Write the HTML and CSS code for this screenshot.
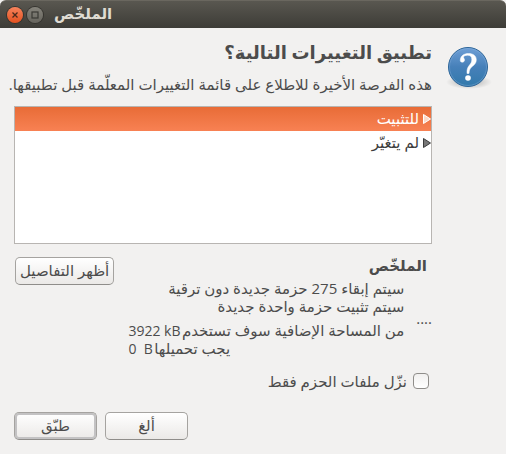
FILE: index.html
```
<!DOCTYPE html>
<html lang="ar" dir="rtl">
<head>
<meta charset="utf-8">
<title>الملخّص</title>
<link rel="stylesheet" href="styles.css">
</head>
<body>
<header class="titlebar">
  <button class="win-button close" type="button" aria-label="أغلق">
    <svg viewBox="0 0 16 16" width="16" height="16"><path d="M5.500 5.500l5 5m0-5l-5 5" fill="none" stroke="#4a2a1c" stroke-width="1.300"/></svg>
  </button>
  <button class="win-button maximize" type="button" aria-label="كبّر">
    <svg viewBox="0 0 16 16" width="16" height="16"><rect x="5" y="5" width="6" height="6" fill="none" stroke="#3a3934" stroke-width="1.200"/></svg>
  </button>
  <span class="window-title">الملخّص</span>
</header>
<main class="dialog">
  <svg class="question" viewBox="0 0 48 48" width="48" height="48" aria-hidden="true">
    <defs>
      <linearGradient id="disc" x1="0" y1="0" x2="0" y2="1"><stop offset="0" stop-color="#6f9fd6"/><stop offset=".5" stop-color="#4680b9"/><stop offset="1" stop-color="#3279ab"/></linearGradient>
      <radialGradient id="shade"><stop offset="0" stop-color="#000" stop-opacity=".3"/><stop offset="1" stop-color="#000" stop-opacity="0"/></radialGradient>
    </defs>
    <ellipse cx="25" cy="38" rx="23" ry="7" fill="url(#shade)"/>
    <circle cx="24" cy="23" r="19.500" fill="url(#disc)" stroke="#2e6699"/>
    <circle cx="24" cy="23" r="18.500" fill="none" stroke="#8fb8e2" stroke-opacity=".35"/>
    <path d="M16.300 16.500C16.300 12 19.800 9.500 24.500 9.500C29.500 9.500 32.300 12 32.300 15.800C32.300 19 30.500 20.700 28.500 22.300C26.300 24 25.200 25.500 25 29.500H23C22.800 25.500 23.500 23.500 25.300 21.300C27 19.300 27.800 18 27.800 15.500C27.800 12.500 26.300 11.200 23.700 11.200C21.300 11.200 19.500 12 19.500 13.300C19.500 14.200 20.500 14.700 20.500 16C20.500 17.300 19.600 18.200 18.300 18.200C17.100 18.200 16.300 17.500 16.300 16.500Z" fill="#fff" stroke="#fff" stroke-width=".5"/>
    <circle cx="24" cy="34" r="2.800" fill="#fff"/>
  </svg>
  <div class="content">
    <h1>تطبيق التغييرات التالية؟</h1>
    <p class="intro">هذه الفرصة الأخيرة للاطلاع على قائمة التغييرات المعلّمة قبل تطبيقها.</p>
    <ul class="tree">
      <li class="row selected"><svg class="expander" viewBox="0 0 8 10" width="8" height="10"><path d="M.5.500L7.500 5L.5 9.500Z" fill="#fbd9ca" stroke="#fff"/></svg>للتثبيت</li>
      <li class="row"><svg class="expander" viewBox="0 0 8 10" width="8" height="10"><path d="M.5.500L7.500 5L.5 9.500Z" fill="#777" stroke="#3c3c3c"/></svg>لم يتغيّر</li>
    </ul>
    <section class="summary">
      <div class="summary-text">
        <h2>الملخّص</h2>
        <div class="details">
          <span class="dots">....</span>
          <div class="lines">
            <p>سيتم إبقاء 275 حزمة جديدة دون ترقية<br>سيتم تثبيت حزمة واحدة جديدة</p>
            <div class="sizes">
              <p>من المساحة الإضافية سوف تستخدم&#8202;<bdi dir="ltr">3922 kB</bdi></p>
              <p>يجب تحميلها&#8202;<bdi dir="ltr">0&nbsp; B</bdi></p>
            </div>
          </div>
        </div>
      </div>
      <button class="button show" type="button">أظهر التفاصيل</button>
    </section>
    <label class="check"><input type="checkbox">نزّل ملفات الحزم فقط</label>
    <footer class="actions">
      <button class="button action" type="button">ألغ</button>
      <button class="button action default" type="button">طبّق</button>
    </footer>
  </div>
</main>
</body>
</html>
```

FILE: styles.css
```
* { box-sizing: border-box; }
body {
  margin: 0;
  min-height: 100vh;
  background: #f2f1f0;
  color: #4c4c4c;
  font: 15px/18px "Open Sans", "DejaVu Sans", sans-serif;
}
h1, h2, p, ul { margin: 0; padding: 0; }
button { font: inherit; color: inherit; }
.titlebar {
  direction: ltr;
  display: flex;
  align-items: center;
  gap: 4px;
  height: 28px;
  padding: 0 7px;
  border-top: 1px solid #6a675f;
  border-radius: 6px 6px 0 0;
  background: linear-gradient(#595750, #3d3c37);
}
.win-button {
  display: grid;
  width: 16px;
  height: 16px;
  padding: 0;
  border: 0;
  border-radius: 50%;
  box-shadow: 0 0 0 1px #35342f;
}
.close { background: linear-gradient(#f6835c, #e4511f); }
.maximize { background: linear-gradient(#85837b, #66645d); }
.window-title {
  margin-left: 7px;
  padding-bottom: 2px;
  color: #dfdbd2;
  font-family: "DejaVu Sans", sans-serif;
  font-weight: bold;
}
.dialog {
  display: flex;
  gap: 12px;
  padding: 13px 14px 14px;
}
.question { flex: none; margin-top: 3px; }
.content { flex: 1; min-width: 0; }
h1 { font-size: 18px; line-height: 22px; }
.intro { margin: 12px 0 13px; white-space: nowrap; }
.tree {
  height: 138px;
  border: 1px solid #b8b5b2;
  background: #fff;
  list-style: none;
  color: #3c3c3c;
}
.row {
  display: flex;
  align-items: center;
  gap: 4px;
  height: 24px;
  padding-bottom: 2px;
}
.expander { margin-top: 2px; }
.selected {
  background: linear-gradient(#e86c37, #f88153);
  color: #fff;
}
.summary {
  display: flex;
  justify-content: space-between;
  align-items: flex-start;
  padding: 13px 0 0 1px;
}
.summary-text { flex: 1; }
h2 { padding-right: 5px; font-size: 15px; line-height: 16px; }
.details {
  display: flex;
  align-items: center;
  gap: 12px;
  margin-top: 6px;
}
.lines { display: flex; flex-direction: column; gap: 6px; white-space: nowrap; }
.sizes p { text-align: left; }
.sizes bdi { font-size: 14px; line-height: 14px; }
.button {
  height: 28px;
  padding: 0 4px 2px;
  border: 1px solid #a5a3a0;
  border-bottom-color: #8f8d8a;
  border-radius: 5px;
  background: linear-gradient(#fff, #ebe9e7);
  white-space: nowrap;
}
.check {
  display: flex;
  align-items: center;
  gap: 6px;
  margin-top: 15px;
  padding-right: 3px;
}
.check input {
  appearance: none;
  width: 16px;
  height: 16px;
  margin: 0;
  border: 1px solid #8f8d8a;
  border-radius: 4px;
  background: linear-gradient(#f1f0ef, #fff);
}
.actions {
  display: flex;
  justify-content: flex-end;
  gap: 8px;
  margin-top: 22px;
}
.action { width: 83px; }
.default { box-shadow: inset 0 0 0 2px #c3c2c3; }
```
